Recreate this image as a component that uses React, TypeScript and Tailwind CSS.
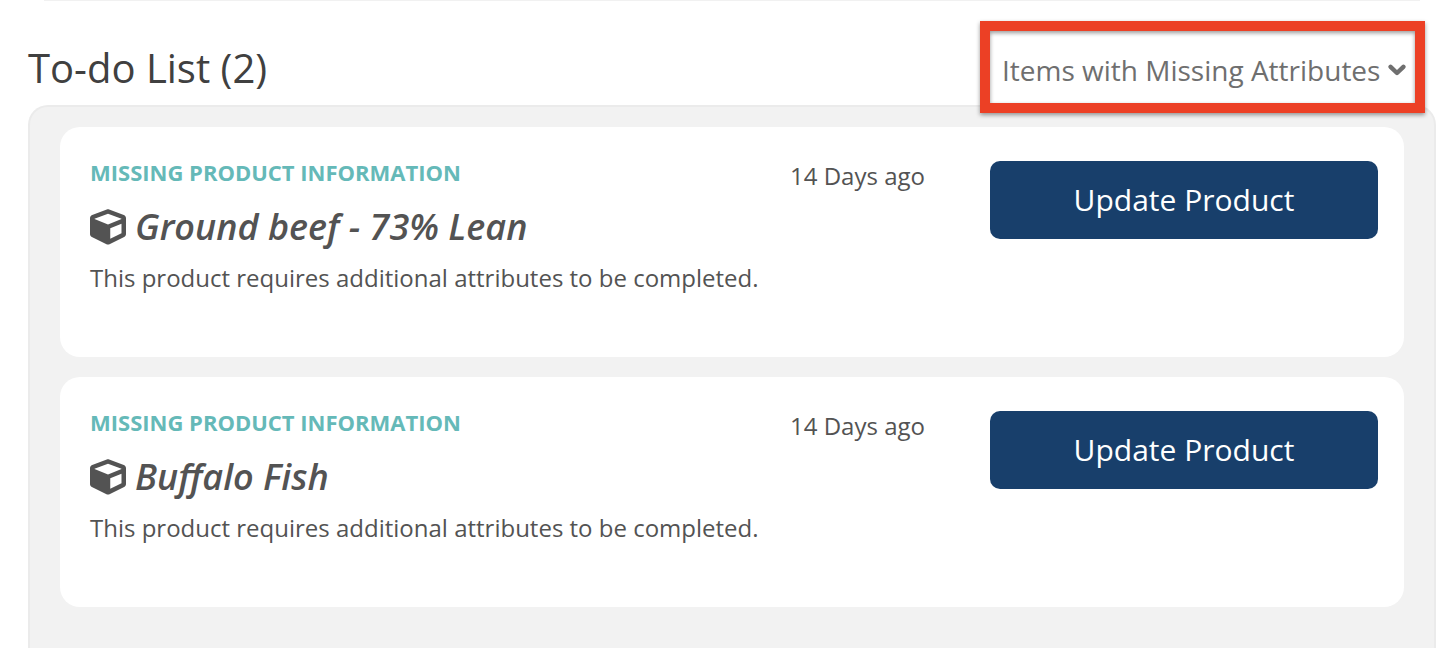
import { FaCube } from 'react-icons/fa';

type TodoItem = {
  id: string;
  type: string;
  name: string;
  description: string;
  age: string;
};

const todoItems: TodoItem[] = [
  {
    id: 'ground-beef',
    type: 'Missing Product Information',
    name: 'Ground beef - 73% Lean',
    description: 'This product requires additional attributes to be completed.',
    age: '14 Days ago',
  },
  {
    id: 'buffalo-fish',
    type: 'Missing Product Information',
    name: 'Buffalo Fish',
    description: 'This product requires additional attributes to be completed.',
    age: '14 Days ago',
  },
];

const TodoFilter = () => (
  <div className="relative mr-[30px] flex items-center pt-1">
    <select
      aria-label="Filter to-do list"
      className="appearance-none bg-transparent pr-[25px] text-[28px] leading-10 text-[#6f6f6f] outline-none"
    >
      <option>Items with Missing Attributes</option>
    </select>
    <svg
      viewBox="0 0 18 12"
      className="pointer-events-none absolute right-0 h-3 w-[18px]"
      fill="none"
      stroke="#6f6f6f"
      strokeWidth="4.4"
      strokeLinecap="round"
      strokeLinejoin="round"
      aria-hidden="true"
    >
      <path d="M2.6 2.8 9 9 15.4 2.8" />
    </svg>
    <div className="pointer-events-none absolute -top-[25px] -right-[19px] -bottom-[23px] -left-[22px] border-10 border-[#ec4025] drop-shadow-[0_2px_2px_rgba(0,0,0,0.4)]" />
  </div>
);

const TodoCard = ({ item }: { item: TodoItem }) => (
  <li className="flex min-h-[230px] items-start rounded-[20px] bg-white pt-[34px] pr-[26px] pb-8 pl-[30px]">
    <div className="min-w-0 flex-1">
      <p className="text-[22px] leading-[22px] font-bold text-[#65b9b8] uppercase">{item.type}</p>
      <h2 className="mt-5 flex items-center gap-[9px] text-[36px] leading-12 font-semibold text-[#535353] italic">
        <FaCube className="size-9 shrink-0" />
        {item.name}
      </h2>
      <p className="mt-[11px] text-[24px] leading-8 text-[#535353]">{item.description}</p>
    </div>
    <p className="w-[200px] shrink-0 text-[24px] leading-[30px] text-[#535353]">{item.age}</p>
    <button
      type="button"
      className="h-[78px] w-[388px] shrink-0 rounded-[10px] bg-[#183f6b] text-[30px] leading-10 text-white"
    >
      Update Product
    </button>
  </li>
);

export default function App() {
  return (
    <div className="flex min-h-screen flex-col bg-white pr-1 pl-7 font-['Open_Sans',sans-serif]">
      <div className="mr-4 ml-4 h-px bg-[#f1f1f1]" />
      <header className="flex items-center justify-between pt-[39px] pb-[9px]">
        <h1 className="text-[40px] leading-14 text-[#404040]">To-do List (2)</h1>
        <TodoFilter />
      </header>
      <ul className="flex flex-1 flex-col gap-5 rounded-t-[20px] border-2 border-b-0 border-[#ebebeb] bg-[#f2f2f2] px-[30px] py-5">
        {todoItems.map(item => (
          <TodoCard key={item.id} item={item} />
        ))}
      </ul>
    </div>
  );
}
